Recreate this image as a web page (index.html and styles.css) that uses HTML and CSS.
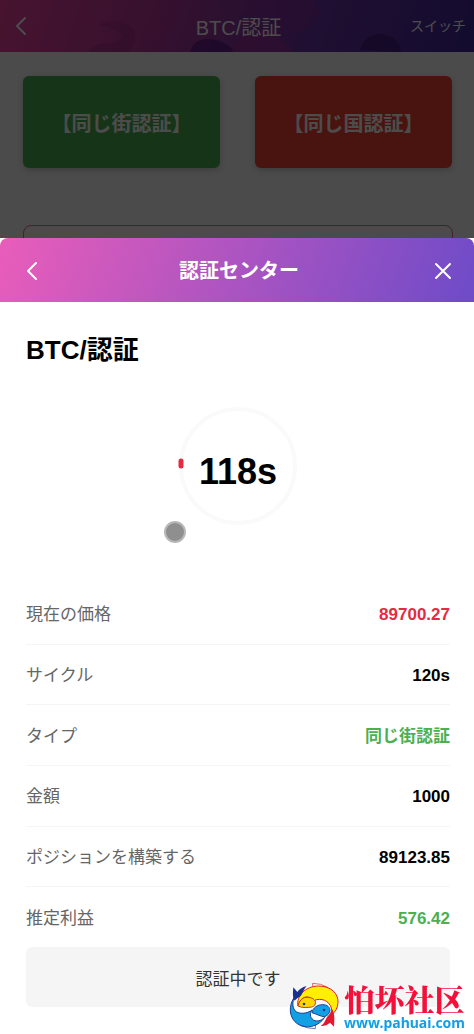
FILE: index.html
```html
<!DOCTYPE html>
<html lang="ja">
<head>
<meta charset="utf-8">
<meta name="viewport" content="width=device-width, initial-scale=1">
<title>BTC/認証</title>
<link rel="stylesheet" href="styles.css">
</head>
<body>
<main class="page">
  <header class="topbar">
    <svg class="petals" viewBox="0 0 474 52" preserveAspectRatio="xMidYMid slice" aria-hidden="true">
      <path d="M98 25q22-10 36 5 4 14-7 22H88q5-9 22-9 12-2 12-8-9-9-24-10z" fill="#8e2470" opacity=".3"/>
      <path d="M190 52q4-14 20-13 18 2 24 13z" fill="#4c1080" opacity=".6"/>
      <path d="M248 0h64q15 11 0 24-15 12-32 10-22-3-42-18 10-5 10-16z" fill="#8a2a9c" opacity=".5"/>
      <path d="M232 52q3-18 20-22 20-3 28 8l14 14z" fill="#a82a9c" opacity=".5"/>
      <path d="M360 50q5-17 23-16 17 4 18 18z" fill="#3a1470" opacity=".6"/>
    </svg>
    <button class="icon-btn" aria-label="戻る"><svg width="12" height="20" viewBox="0 0 12 20"><path d="M10 2 2 10l8 8"/></svg></button>
    <h1 class="topbar-title">BTC/認証</h1>
    <button class="switch">スイッチ</button>
  </header>
  <div class="choices">
    <button class="choice choice-up">【同じ街認証】</button>
    <button class="choice choice-down">【同じ国認証】</button>
  </div>
  <div class="panel"></div>
</main>

<div class="overlay">
  <section class="sheet" role="dialog" aria-labelledby="sheet-title">
    <header class="sheet-head">
      <button class="icon-btn" aria-label="戻る"><svg width="12" height="20" viewBox="0 0 12 20"><path d="M10 2 2 10l8 8"/></svg></button>
      <h2 class="sheet-title" id="sheet-title">認証センター</h2>
      <button class="icon-btn close" aria-label="閉じる"><svg width="18" height="18" viewBox="0 0 18 18"><path d="m2 2 14 14M16 2 2 16"/></svg></button>
    </header>
    <div class="sheet-body">
      <h3 class="pair">BTC/認証</h3>
      <div class="timer">
        <svg class="ring" viewBox="0 0 124 124" aria-hidden="true">
          <circle cx="62" cy="62" r="57" fill="none" stroke="#fafafa" stroke-width="4"/>
          <path d="M5 57v5" fill="none" stroke="#e42b43" stroke-width="5" stroke-linecap="round"/>
        </svg>
        <span class="seconds">118s</span>
        <span class="touch"></span>
      </div>
      <dl class="details">
        <div class="row"><dt>現在の価格</dt><dd class="red">89700.27</dd></div>
        <div class="row"><dt>サイクル</dt><dd>120s</dd></div>
        <div class="row"><dt>タイプ</dt><dd class="green">同じ街認証</dd></div>
        <div class="row"><dt>金額</dt><dd>1000</dd></div>
        <div class="row"><dt>ポジションを構築する</dt><dd>89123.85</dd></div>
        <div class="row"><dt>推定利益</dt><dd class="green">576.42</dd></div>
      </dl>
      <button class="status">認証中です</button>
    </div>
  </section>
</div>

<div class="mark">
  <svg class="mark-logo" width="52" height="48" viewBox="20 32 156 144" aria-hidden="true">
    <path d="M50 72C60 48 84 38 112 40c38 2 62 24 60 52-1 16-8 30-18 42l-6-4c6-30-12-46-36-46-26 0-36 28-62 28-18 0-28-16-20-40z" fill="#fff"/>
    <path d="M40 76c-8 14-8 38 6 46 16 8 36 2 46-6-6 10-8 20 4 30 14 8 28-2 34-8-14 22-42 34-68 26-36-12-46-54-22-88z" fill="#12a0e4" stroke="#1b3d91" stroke-width="3"/>
    <path d="M50 104c-6-30 22-60 62-60 36 0 60 22 58 50-1 16-8 28-18 36 2-30-16-46-38-46-10 0-18 4-22 10 0-12-8-20-22-16-10 4-16 12-20 26z" fill="#ffef00" stroke="#e5172f" stroke-width="3"/>
    <path d="M50 104c4-16 12-24 24-26 16-2 24 6 28 12 2 14-8 18-20 18-12 2-22 0-32-4z" fill="#ffd800" stroke="#c33a12" stroke-width="3"/>
    <path d="M92 124c2-14 16-24 32-24 14 0 22 8 22 18-2 8-6 14-16 18-12 0-24-8-38-12z" fill="#12a0e4" stroke="#1b3d91" stroke-width="3"/>
    <path d="M40 88c-6-8-6-20-4-40l12 14c6-8 14-14 28-18-8 8-12 22-18 30-6 4-12 8-18 14z" fill="#17328d"/>
    <path d="M152 114c8 10 8 26 6 52l-12-12c-8 6-14 10-28 10 12-8 14-20 20-28 6-6 10-12 14-22z" fill="#e5172f"/>
    <path d="M94 44v-8q26 0 44 12" fill="none" stroke="#e5172f" stroke-width="2"/>
    <path d="M102 160v12q-24 0-44-10" fill="none" stroke="#1b3d91" stroke-width="2"/>
    <circle cx="68" cy="98" r="4" fill="#17328d"/><circle cx="128" cy="116" r="4" fill="#17328d"/>
  </svg>
  <div class="mark-text">
    <span class="mark-name" lang="zh-CN">怕坏社区</span>
    <span class="mark-url">www.pahuai.com</span>
  </div>
</div>
</body>
</html>
```

FILE: styles.css
```css
* { box-sizing: border-box; }

body {
  margin: 0;
  min-height: 100vh;
  background: #fafafa;
  color: #000;
  font-family: "Liberation Sans", "Noto Sans CJK JP", sans-serif;
}

h1, h2, h3, dl, dd { margin: 0; }

button {
  padding: 0;
  border: 0;
  background: none;
  color: inherit;
  font-family: inherit;
  cursor: pointer;
}

.icon-btn { display: flex; justify-self: start; }

.icon-btn svg {
  fill: none;
  stroke: #fff;
  stroke-width: 2;
  stroke-linecap: round;
  stroke-linejoin: round;
}

/* Page behind the sheet */
.topbar {
  position: relative;
  display: grid;
  grid-template-columns: 1fr auto 1fr;
  align-items: center;
  height: 52px;
  padding: 0 8px 0 15px;
  background: linear-gradient(110deg, #f0429e, #b0389c 35%, #6c34a8 65%, #40289c);
  color: #fff;
}

.petals { position: absolute; inset: 0; width: 100%; height: 100%; }
.topbar > :not(.petals) { position: relative; }
.topbar-title { padding: 4px 4px 0 0; font-size: 20px; line-height: 28px; font-weight: 400; }
.switch { justify-self: end; font-size: 14px; line-height: 20px; }

.choices {
  display: grid;
  grid-template-columns: 1fr 1fr;
  gap: 35px;
  padding: 24px 22px 0 23px;
}

.choice {
  height: 92px;
  border-radius: 6px;
  box-shadow: 0 2px 6px rgba(0, 0, 0, .2);
  color: #fff;
  font-size: 20px;
  font-weight: 700;
}

.choice-up { background: #4caf50; }
.choice-down { background: #f44336; }

.panel {
  height: 120px;
  margin: 57px 21px 0 23px;
  border: 1px solid #f06a8c;
  border-radius: 8px;
}

/* Bottom sheet */
.overlay {
  position: fixed;
  inset: 0;
  display: flex;
  flex-direction: column;
  justify-content: flex-end;
  background: rgba(0, 0, 0, .7);
}

.sheet {
  display: flex;
  flex-direction: column;
  height: 77%;
  background: #fff;
}

.sheet-head {
  display: grid;
  grid-template-columns: 1fr auto 1fr;
  align-items: center;
  flex: none;
  height: 64px;
  padding: 2px 22px 0 26px;
  border-radius: 8px 8px 0 0;
  background: linear-gradient(110deg, #e95dba, #6e4bc8);
  color: #fff;
}

.sheet-title { font-size: 20px; line-height: 28px; }
.close { justify-self: end; }

.sheet-body {
  display: flex;
  flex: 1;
  flex-direction: column;
  padding: 28px 24px 27px 26px;
}

.pair { font-size: 26px; line-height: 40px; }

.timer {
  position: relative;
  display: grid;
  place-items: center;
  align-self: center;
  width: 124px;
  height: 124px;
  margin: 34px 0 56px;
}

.ring { position: absolute; inset: 0; overflow: visible; }
.seconds { padding-top: 12px; font-size: 36px; line-height: 44px; font-weight: 700; }

.touch {
  position: absolute;
  left: -12px;
  bottom: -15px;
  width: 22px;
  height: 22px;
  border: 2px solid #b8b8b8;
  border-radius: 50%;
  background: #8f8f8f;
}

.details { display: flex; flex: 1; flex-direction: column; }

.row {
  display: flex;
  flex: 1;
  align-items: center;
  justify-content: space-between;
  padding-top: 3px;
  border-bottom: 1px solid #f5f5f5;
  font-size: 17px;
  line-height: 24px;
}

.row:last-child { border-bottom: 0; }
.row dt { color: #666; }
.row dd { font-weight: 700; }
.row .red { color: #e42b43; }
.row .green { color: #4caf50; }

.status {
  height: 60px;
  border-radius: 6px;
  background: #f5f5f5;
  color: #333;
  font-size: 17px;
}

/* Site mark */
.mark {
  position: fixed;
  right: 9px;
  bottom: 3px;
  display: flex;
  align-items: center;
  gap: 4px;
}

.mark-logo { flex: none; }
.mark-text { display: flex; flex-direction: column; align-items: center; }

.mark-name {
  color: #f5103c;
  font-family: "Noto Serif CJK SC", "Noto Sans CJK SC", serif;
  font-size: 30px;
  line-height: 34px;
  font-weight: 900;
}

.mark-url {
  color: #12a0e4;
  font-family: "Noto Sans", sans-serif;
  font-size: 14px;
  line-height: 16px;
  font-weight: 700;
}
```
